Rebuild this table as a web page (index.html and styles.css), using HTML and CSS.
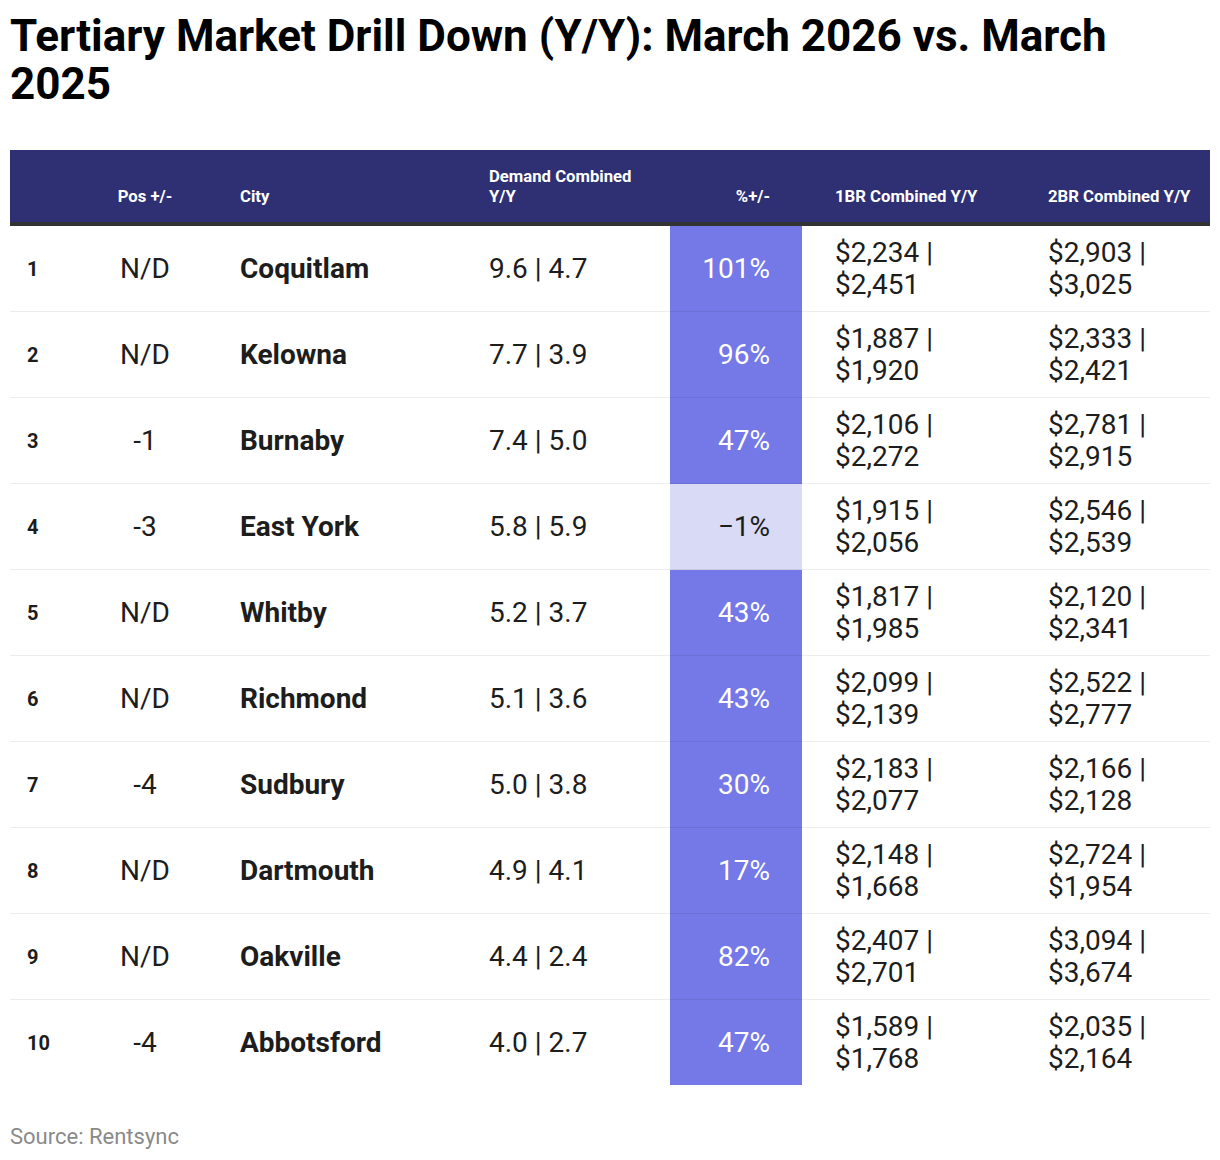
FILE: index.html
```html
<!DOCTYPE html>
<html lang="en">
<head>
<meta charset="utf-8">
<title>Tertiary Market Drill Down</title>
<link rel="stylesheet" href="styles.css">
</head>
<body>
<div class="chart">
  <h1 class="title">Tertiary Market Drill Down (Y/Y): March 2026 vs. March 2025</h1>
  <table class="tbl">
    <colgroup>
      <col class="w-rank"><col class="w-pos"><col class="w-city"><col class="w-dem"><col class="w-pct"><col class="w-1br"><col class="w-2br">
    </colgroup>
    <thead>
      <tr>
        <th class="c-rank"></th>
        <th class="c-pos">Pos +/-</th>
        <th class="c-city">City</th>
        <th class="c-dem">Demand Combined Y/Y</th>
        <th class="c-pct">%+/-</th>
        <th class="c-1br">1BR Combined Y/Y</th>
        <th class="c-2br">2BR Combined Y/Y</th>
      </tr>
    </thead>
    <tbody>
      <tr><td class="c-rank">1</td><td class="c-pos">N/D</td><td class="c-city">Coquitlam</td><td class="c-dem">9.6 | 4.7</td><td class="c-pct hi">101%</td><td class="c-1br">$2,234 | $2,451</td><td class="c-2br">$2,903 | $3,025</td></tr>
      <tr><td class="c-rank">2</td><td class="c-pos">N/D</td><td class="c-city">Kelowna</td><td class="c-dem">7.7 | 3.9</td><td class="c-pct hi">96%</td><td class="c-1br">$1,887 | $1,920</td><td class="c-2br">$2,333 | $2,421</td></tr>
      <tr><td class="c-rank">3</td><td class="c-pos">-1</td><td class="c-city">Burnaby</td><td class="c-dem">7.4 | 5.0</td><td class="c-pct hi">47%</td><td class="c-1br">$2,106 | $2,272</td><td class="c-2br">$2,781 | $2,915</td></tr>
      <tr><td class="c-rank">4</td><td class="c-pos">-3</td><td class="c-city">East York</td><td class="c-dem">5.8 | 5.9</td><td class="c-pct lo">−1%</td><td class="c-1br">$1,915 | $2,056</td><td class="c-2br">$2,546 | $2,539</td></tr>
      <tr><td class="c-rank">5</td><td class="c-pos">N/D</td><td class="c-city">Whitby</td><td class="c-dem">5.2 | 3.7</td><td class="c-pct hi">43%</td><td class="c-1br">$1,817 | $1,985</td><td class="c-2br">$2,120 | $2,341</td></tr>
      <tr><td class="c-rank">6</td><td class="c-pos">N/D</td><td class="c-city">Richmond</td><td class="c-dem">5.1 | 3.6</td><td class="c-pct hi">43%</td><td class="c-1br">$2,099 | $2,139</td><td class="c-2br">$2,522 | $2,777</td></tr>
      <tr><td class="c-rank">7</td><td class="c-pos">-4</td><td class="c-city">Sudbury</td><td class="c-dem">5.0 | 3.8</td><td class="c-pct hi">30%</td><td class="c-1br">$2,183 | $2,077</td><td class="c-2br">$2,166 | $2,128</td></tr>
      <tr><td class="c-rank">8</td><td class="c-pos">N/D</td><td class="c-city">Dartmouth</td><td class="c-dem">4.9 | 4.1</td><td class="c-pct hi">17%</td><td class="c-1br">$2,148 | $1,668</td><td class="c-2br">$2,724 | $1,954</td></tr>
      <tr><td class="c-rank">9</td><td class="c-pos">N/D</td><td class="c-city">Oakville</td><td class="c-dem">4.4 | 2.4</td><td class="c-pct hi">82%</td><td class="c-1br">$2,407 | $2,701</td><td class="c-2br">$3,094 | $3,674</td></tr>
      <tr class="last"><td class="c-rank">10</td><td class="c-pos">-4</td><td class="c-city">Abbotsford</td><td class="c-dem">4.0 | 2.7</td><td class="c-pct hi">47%</td><td class="c-1br">$1,589 | $1,768</td><td class="c-2br">$2,035 | $2,164</td></tr>
    </tbody>
  </table>
  <div class="source">Source: Rentsync</div>
</div>
</body>
</html>
```

FILE: styles.css
```css
html, body {
  margin: 0;
  padding: 0;
  background: #ffffff;
}

body {
  font-family: Roboto, "Liberation Sans", Arial, sans-serif;
  color: #1d1d1d;
}

.chart {
  padding: 12px 10px 0 10px;
}

.title {
  margin: 0;
  font-size: 44px;
  line-height: 48px;
  font-weight: 700;
  color: #000000;
}

.tbl {
  margin-top: 42px;
  width: 1200px;
  border-collapse: collapse;
  table-layout: fixed;
}

.w-rank { width: 80px; }
.w-pos { width: 110px; }
.w-city { width: 270px; }
.w-dem { width: 200px; }
.w-pct { width: 132px; }
.w-1br { width: 213px; }
.w-2br { width: 195px; }

.tbl th {
  background: #2f2f74;
  color: #ffffff;
  font-size: 16.7px;
  line-height: 20px;
  font-weight: 700;
  text-align: left;
  vertical-align: bottom;
  height: 74px;
  padding: 0 0 15px 0;
  box-sizing: border-box;
  border-bottom: 4px solid #333333;
}

.tbl td {
  height: 85px;
  padding: 0;
  font-size: 28px;
  line-height: 32px;
  vertical-align: middle;
  border-bottom: 1px solid rgba(0, 0, 0, 0.07);
}

.tbl tr.last td {
  border-bottom: none;
}

.c-rank { padding-left: 17px !important; }
td.c-rank {
  font-size: 20px !important;
  font-weight: 700;
}

.c-pos { text-align: center !important; }

.c-city { padding-left: 40px !important; }
td.c-city { font-weight: 700; }

.c-dem { padding-left: 19px !important; padding-right: 26px !important; }

.c-pct { text-align: right !important; padding-right: 32px !important; }
td.hi { background: #7479e7; color: #ffffff; }
td.lo { background: #d9daf5; color: #1d1d1d; }

.c-1br { padding-left: 33px !important; padding-right: 30px !important; }
.c-2br { padding-left: 33px !important; padding-right: 12px !important; }

.source {
  margin-top: 40px;
  font-size: 22px;
  line-height: 24px;
  color: #8a8a8a;
}
```
